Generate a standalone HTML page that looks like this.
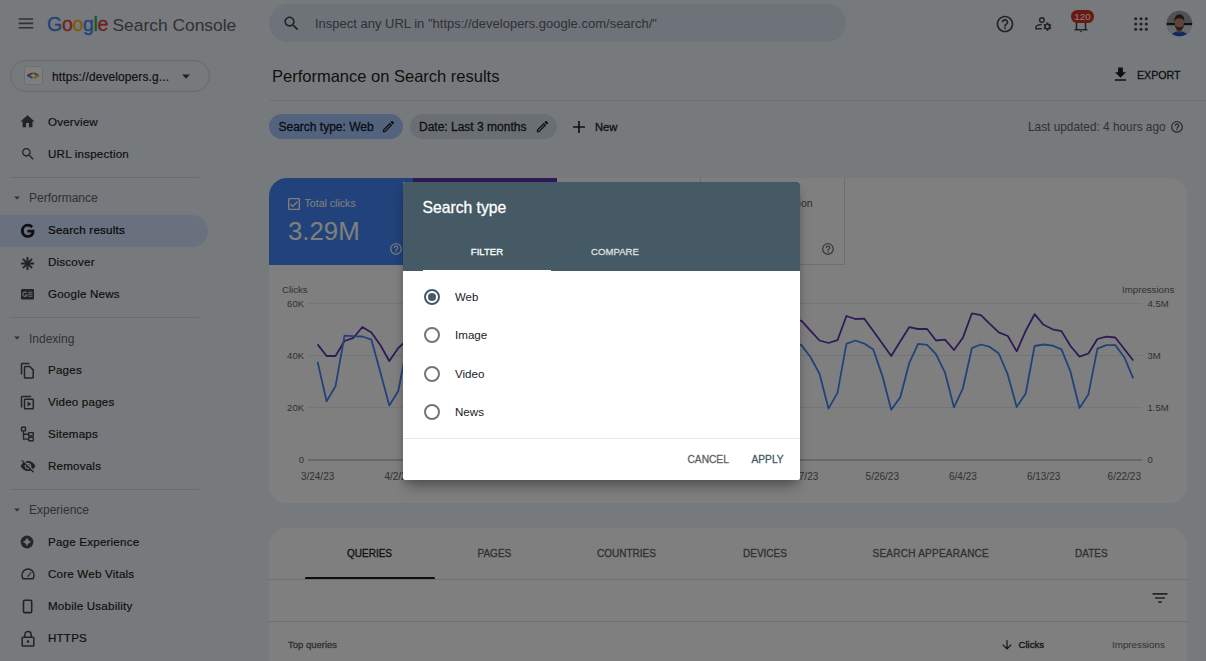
<!DOCTYPE html>
<html><head><meta charset="utf-8">
<style>
*{box-sizing:border-box;margin:0;padding:0}
html,body{width:1206px;height:661px;overflow:hidden}
body{position:relative;background:#edf4f9;font-family:"Liberation Sans",sans-serif;color:#1f1f1f}
.a{position:absolute;white-space:nowrap;line-height:20px;height:20px}
.m{-webkit-text-stroke:0.3px currentColor}
svg{position:absolute;display:block}
.nav{position:absolute;left:48px;font-size:11.6px;letter-spacing:0.2px;color:#1f1f1f;line-height:20px;white-space:nowrap;-webkit-text-stroke:0.2px currentColor}
.hd{position:absolute;left:29px;font-size:12px;color:#5f6368;line-height:20px;white-space:nowrap}
.div{position:absolute;height:1px;background:#d9d9d9}
#scrim{position:absolute;left:0;top:0;width:1206px;height:661px;background:rgba(0,0,0,0.5)}
</style></head><body>
<!-- HEADER -->
<svg style="left:16px;top:11px" width="20" height="24" viewBox="0 0 20 24"><path fill="#5f6368" d="M2.7 7.2h14.5v1.6H2.7zM2.7 11.6h14.5v1.6H2.7zM2.7 16h14.5v1.6H2.7z"/></svg>
<div class="a" style="left:47px;top:14px;font-size:19.5px;letter-spacing:-0.3px;-webkit-text-stroke:0.35px currentColor"><span style="color:#4285f4">G</span><span style="color:#ea4335">o</span><span style="color:#fbbc05">o</span><span style="color:#4285f4">g</span><span style="color:#34a853">l</span><span style="color:#ea4335">e</span></div>
<div class="a" style="left:112.5px;top:15px;font-size:17.4px;color:#5f6368">Search Console</div>

<div style="position:absolute;left:269px;top:4px;width:577px;height:38px;border-radius:19px;background:#dde5f3"></div>
<svg style="left:282px;top:14px" width="19" height="19" viewBox="0 0 24 24"><path fill="#444746" d="M15.5 14h-.79l-.28-.27C15.410 12.59 16 11.11 16 9.5 16 5.91 13.09 3 9.5 3S3 5.91 3 9.5 5.91 16 9.5 16c1.61 0 3.09-.59 4.23-1.57l.27.28v.79l5 4.99L20.49 19l-4.99-5zm-6 0C7.01 14 5 11.99 5 9.5S7.01 5 9.5 5 14 7.01 14 9.5 11.99 14 9.5 14z"/></svg>
<div class="a" style="left:315px;top:13.5px;font-size:13px;color:#5f6368">Inspect any URL in "https://developers.google.com/search/"</div>

<svg style="left:995px;top:13.5px" width="20" height="20" viewBox="0 0 24 24"><path fill="#444746" d="M11 18h2v-2h-2v2zm1-16C6.48 2 2 6.48 2 12s4.48 10 10 10 10-4.48 10-10S17.52 2 12 2zm0 18c-4.41 0-8-3.59-8-8s3.59-8 8-8 8 3.59 8 8-3.59 8-8 8zm0-14c-2.21 0-4 1.79-4 4h2c0-1.1.9-2 2-2s2 .9 2 2c0 2-3 1.750-3 5h2c0-2.25 3-2.5 3-5 0-2.21-1.79-4-4-4z"/></svg>
<svg style="left:1033px;top:14px" width="20" height="20" viewBox="0 0 20 20"><g fill="none" stroke="#444746" stroke-width="1.5"><circle cx="8.9" cy="6" r="2.3"/><path d="M8.8 10.6C6.5 10.6 3 11.4 3 12.6V14.7H8.9"/></g><path fill="#444746" transform="translate(14.4,12.6) scale(0.42) translate(-12,-12)" d="M19.14 12.94c.04-.3.06-.61.06-.94 0-.32-.02-.64-.07-.94l2.03-1.58c.18-.14.23-.41.12-.61l-1.920-3.32c-.12-.22-.37-.29-.59-.22l-2.39.96c-.5-.38-1.03-.7-1.62-.94l-.36-2.54c-.04-.24-.24-.41-.48-.41h-3.84c-.24 0-.43.17-.47.41l-.36 2.54c-.59.24-1.13.57-1.62.94l-2.39-.96c-.22-.08-.47 0-.59.22L2.74 8.87c-.12.21-.08.47.12.61l2.03 1.58c-.05.3-.09.63-.09.94s.02.64.07.94l-2.03 1.58c-.18.14-.23.41-.12.61l1.92 3.32c.12.22.37.29.59.22l2.39-.96c.5.38 1.03.7 1.62.94l.36 2.54c.05.24.24.41.48.41h3.84c.24 0 .44-.17.47-.41l.36-2.54c.59-.24 1.13-.56 1.62-.94l2.39.96c.22.08.47 0 .59-.22l1.92-3.32c.12-.22.07-.47-.12-.61l-2.01-1.58zM12 15.6c-1.98 0-3.6-1.62-3.6-3.6s1.62-3.6 3.6-3.6 3.6 1.62 3.6 3.6-1.62 3.6-3.6 3.6z"/></svg>
<svg style="left:1072px;top:17px" width="18" height="17" viewBox="0 0 18 17"><g fill="none" stroke="#444746" stroke-width="1.6"><path d="M4.5 3v9.5M13.5 3v9.5M2.5 12.8h13"/></g><path fill="#444746" d="M7.8 14h2.4l-1.2 1.4z"/></svg>
<div style="position:absolute;left:1071px;top:10px;width:23px;height:12.8px;border-radius:6.4px;background:#d93025;color:#fff;font-size:9.8px;line-height:13px;text-align:center">120</div>
<svg style="left:1133px;top:16px" width="16" height="16" viewBox="0 0 16 16"><g fill="#444746"><circle cx="2.7" cy="2.7" r="1.55"/><circle cx="8" cy="2.7" r="1.55"/><circle cx="13.3" cy="2.7" r="1.55"/><circle cx="2.7" cy="8" r="1.55"/><circle cx="8" cy="8" r="1.55"/><circle cx="13.3" cy="8" r="1.55"/><circle cx="2.7" cy="13.3" r="1.55"/><circle cx="8" cy="13.3" r="1.55"/><circle cx="13.3" cy="13.3" r="1.55"/></g></svg>
<svg style="left:1166px;top:10px" width="27" height="27" viewBox="0 0 27 27"><defs><clipPath id="av"><circle cx="13.4" cy="13.45" r="12.8"/></clipPath></defs><g clip-path="url(#av)"><rect width="27" height="27" fill="#9ea3a9"/><rect y="15" width="27" height="12" fill="#cdd3da"/><rect y="12.9" width="27" height="2.3" fill="#23272c"/><path d="M4 27c1.5-3.5 4.5-5.5 9.4-5.5s8 2 9.6 5.5z" fill="#1f4fbf"/><path d="M10.6 19h5.2v3.5h-5.2z" fill="#a87a66"/><ellipse cx="13.3" cy="12.6" rx="4.7" ry="6.6" fill="#bb8670"/><path d="M8.4 12.2c-.3-5 1.8-7.6 5-7.6s5.2 2.4 4.9 7.2c-.6-2.3-1.8-3.5-4.9-3.5s-4.4 1.4-5 3.9z" fill="#3b2c25"/><path d="M8.8 14.5c.4 4 2.3 6.2 4.6 6.2s4.2-2.2 4.6-6.2c-.8 1.8-2.2 2.6-4.6 2.6s-3.8-.8-4.6-2.6z" fill="#5b4037"/></g></svg>
<!-- SIDEBAR -->
<div style="position:absolute;left:10px;top:60px;width:200px;height:32px;border:1px solid #d0d2d4;border-radius:16px"></div>
<div style="position:absolute;left:23.5px;top:66px;width:19px;height:19px;border-radius:3px;background:#fff;border:1px solid #dadce0"></div>
<svg style="left:26px;top:70px" width="14" height="12" viewBox="0 0 14 12"><g fill="none" stroke-width="1.9" stroke-linecap="round"><path d="M6 3.5L2 5.4" stroke="#ea4335"/><path d="M2 5.7L5.8 7.6" stroke="#4285f4"/><path d="M8.4 3.4L12.3 5.5" stroke="#34a853"/><path d="M12 5.9L8.4 7.9" stroke="#fbbc05"/></g></svg>
<div class="a" style="left:52px;top:66.5px;font-size:11.9px;letter-spacing:0.15px;color:#1f1f1f;-webkit-text-stroke:0.2px #1f1f1f">https://developers.g...</div>
<svg style="left:180px;top:72px" width="12" height="10" viewBox="0 0 12 10"><path d="M2 2.5h8L6 6.8z" fill="#444746"/></svg>

<svg style="left:19px;top:113px" width="17" height="17" viewBox="0 0 24 24"><path fill="#444746" d="M10 20v-6h4v6h5v-8h3L12 3 2 12h3v8z"/></svg>
<div class="nav" style="top:112px">Overview</div>
<svg style="left:19.5px;top:146px" width="16" height="16" viewBox="0 0 24 24"><path fill="#444746" d="M15.5 14h-.79l-.28-.27C15.41 12.59 16 11.11 16 9.5 16 5.91 13.09 3 9.5 3S3 5.91 3 9.5 5.91 16 9.5 16c1.61 0 3.09-.59 4.23-1.57l.27.28v.79l5 4.99L20.49 19l-4.99-5zm-6 0C7.01 14 5 11.99 5 9.5S7.01 5 9.5 5 14 7.01 14 9.5 11.99 14 9.5 14z"/></svg>
<div class="nav" style="top:144px">URL inspection</div>
<div class="div" style="left:10px;top:177px;width:189px"></div>

<svg style="left:12px;top:193px" width="10" height="10" viewBox="0 0 10 10"><path d="M2 3.5h6L5 6.5z" fill="#5f6368"/></svg>
<div class="hd" style="top:188px">Performance</div>
<div style="position:absolute;left:0;top:215px;width:208px;height:31.5px;border-radius:0 16px 16px 0;background:#d3e3fd"></div>
<svg style="left:19.6px;top:223px" width="15.6" height="15.6" viewBox="0 0 24 24"><path fill="#1f1f1f" stroke="#1f1f1f" stroke-width="1.6" stroke-linejoin="round" d="M21.35,11.1H12.18V13.83H18.69C18.36,17.64 15.19,19.27 12.19,19.27C8.36,19.27 5,16.25 5,12C5,7.9 8.2,4.73 12.2,4.73C15.29,4.73 17.1,6.7 17.1,6.7L19,4.72C19,4.72 16.56,2 12.1,2C6.42,2 2.03,6.8 2.03,12C2.03,17.05 6.16,22 12.250,22C17.6,22 21.5,18.33 21.5,12.91C21.5,11.76 21.35,11.1 21.35,11.1V11.1Z"/></svg>
<div class="nav" style="top:220px;color:#0b0b0b">Search results</div>
<svg style="left:20px;top:255.5px" width="15" height="15" viewBox="0 0 15 15"><g stroke="#444746" stroke-width="2"><path d="M7.5 1v13M1 7.5h13M2.9 2.9l9.2 9.2M12.1 2.9l-9.2 9.2"/></g></svg>
<div class="nav" style="top:252px">Discover</div>
<svg style="left:21px;top:289px" width="13" height="11" viewBox="0 0 13 11"><rect width="13" height="10.5" rx="1.3" fill="#444746"/><path d="M5.6 3.8A2.2 2.2 0 1 0 5.9 6.2H4.2" fill="none" stroke="#d8dde2" stroke-width="1.2"/><path d="M7.2 3.3h4.2M7.2 5.3h4.2M7.2 7.3h4.2" stroke="#d8dde2" stroke-width="1.1"/></svg>
<div class="nav" style="top:284px">Google News</div>
<div class="div" style="left:10px;top:317px;width:189px"></div>

<svg style="left:12px;top:333px" width="10" height="10" viewBox="0 0 10 10"><path d="M2 3.5h6L5 6.5z" fill="#5f6368"/></svg>
<div class="hd" style="top:328.5px">Indexing</div>
<svg style="left:20px;top:362px" width="15" height="17" viewBox="0 0 15 17"><g fill="none" stroke="#444746" stroke-width="1.5"><path d="M1.5 12.5V2.2c0-.5.3-.8.8-.8h7.2"/><path d="M4.5 5.2c0-.5.3-.8.8-.8h4.4l3.5 3.5v7.4c0 .5-.3.8-.8.8H5.3c-.5 0-.8-.3-.8-.8z"/></g></svg>
<div class="nav" style="top:360px">Pages</div>
<svg style="left:20px;top:394.5px" width="15" height="16" viewBox="0 0 15 16"><g fill="none" stroke="#444746" stroke-width="1.5"><path d="M1.5 12.5V2.2c0-.5.3-.8.8-.8h8.8"/><rect x="4.5" y="4.3" width="8.8" height="9.4" rx=".8"/></g><path d="M7.6 6.6v4.9l3.6-2.45z" fill="#444746"/></svg>
<div class="nav" style="top:392px">Video pages</div>
<svg style="left:20px;top:426px" width="15" height="16" viewBox="0 0 15 16"><g fill="none" stroke="#444746" stroke-width="1.4"><rect x="1.5" y="1.3" width="4" height="3.6" rx=".5"/><rect x="8.7" y="6.6" width="4.6" height="3.4" rx=".5"/><rect x="8.7" y="11.4" width="4.6" height="3.4" rx=".5"/><path d="M3.5 5v8.1h5.2M3.5 8.3h5.2"/></g></svg>
<div class="nav" style="top:424px">Sitemaps</div>
<svg style="left:19.5px;top:458px" width="16" height="16" viewBox="0 0 24 24"><path fill="#444746" d="M12 7c2.76 0 5 2.24 5 5 0 .65-.13 1.26-.36 1.83l2.92 2.92c1.51-1.26 2.7-2.89 3.43-4.75-1.73-4.39-6-7.5-11-7.5-1.4 0-2.74.25-3.98.7l2.16 2.16C10.74 7.13 11.35 7 12 7zM2 4.27l2.28 2.28.46.46C3.08 8.3 1.78 10.02 1 12c1.73 4.39 6 7.5 11 7.5 1.55 0 3.03-.3 4.38-.84l.42.42L19.73 22 21 20.73 3.27 3 2 4.27zM7.53 9.8l1.55 1.55c-.05.21-.08.43-.08.65 0 1.66 1.34 3 3 3 .22 0 .44-.03.65-.08l1.55 1.55c-.67.33-1.41.53-2.2.53-2.76 0-5-2.24-5-5 0-.79.2-1.53.53-2.2zm4.31-.78l3.15 3.150.02-.16c0-1.66-1.34-3-3-3l-.17.01z"/></svg>
<div class="nav" style="top:456px">Removals</div>
<div class="div" style="left:10px;top:488.5px;width:189px"></div>

<svg style="left:12px;top:505px" width="10" height="10" viewBox="0 0 10 10"><path d="M2 3.5h6L5 6.5z" fill="#5f6368"/></svg>
<div class="hd" style="top:500px">Experience</div>
<svg style="left:20.4px;top:535.3px" width="14" height="14" viewBox="0 0 14 14"><circle cx="7" cy="7" r="6.4" fill="#4a4c4e"/><path d="M7 2.6Q7.9 6.1 11.4 7Q7.9 7.9 7 11.4Q6.1 7.9 2.6 7Q6.1 6.1 7 2.6z" fill="#edf4f9"/></svg>
<div class="nav" style="top:532px">Page Experience</div>
<svg style="left:20.5px;top:565px" width="14" height="15" viewBox="0 0 14 15"><g fill="none" stroke="#444746" stroke-width="1.5"><path d="M2 13.8h10c.6-1 1-2.2 1-3.6C13 6.8 10.3 4 7 4S1 6.8 1 10.2c0 1.4.4 2.6 1 3.6z"/></g><path d="M6.2 11.2l3.8-4.4.5.4-3.2 4.8z" fill="#444746"/></svg>
<div class="nav" style="top:564px">Core Web Vitals</div>
<svg style="left:22px;top:599px" width="11" height="15" viewBox="0 0 11 15"><rect x="1.5" y="1.2" width="8.2" height="12.4" rx="1.2" fill="none" stroke="#444746" stroke-width="1.6"/></svg>
<div class="nav" style="top:596px">Mobile Usability</div>
<svg style="left:20.5px;top:630px" width="14" height="17" viewBox="0 0 14 17"><g fill="none" stroke="#444746" stroke-width="1.5"><rect x="1.2" y="7.2" width="11.6" height="8.8" rx=".8"/><path d="M3.8 7.2V5c0-1.9 1.4-3.4 3.2-3.4s3.2 1.5 3.2 3.4v2.2"/></g><circle cx="7" cy="11.6" r="1.3" fill="#444746"/></svg>
<div class="nav" style="top:628px">HTTPS</div>
<!-- MAIN -->
<div class="a" style="left:272px;top:66px;font-size:16.5px;color:#1f1f1f">Performance on Search results</div>
<svg style="left:1111px;top:65px" width="19" height="19" viewBox="0 0 24 24"><path fill="#1f1f1f" d="M19 9h-4V3H9v6H5l7 7 7-7zM5 18v2h14v-2H5z"/></svg>
<div class="a m" style="left:1137px;top:65px;font-size:10.6px;color:#1f1f1f">EXPORT</div>
<div class="div" style="left:269px;top:100px;width:937px;background:#dfe1e3"></div>

<div style="position:absolute;left:269px;top:114px;width:134px;height:25px;border-radius:12.5px;background:#a8c7fa"></div>
<div class="a m" style="left:278.5px;top:116.5px;font-size:12px;color:#0b1a33">Search type: Web</div>
<svg style="left:381px;top:119px" width="15" height="15" viewBox="0 0 24 24"><path fill="#1f1f1f" d="M3 17.25V21h3.75L17.81 9.94l-3.75-3.75L3 17.25zM5.92 19H5v-.92l9.06-9.06.92.92L5.92 19zM20.71 5.63l-2.34-2.34c-.2-.2-.45-.29-.71-.29s-.51.1-.7.29l-1.83 1.830 3.75 3.75 1.83-1.83c.39-.39.39-1.02 0-1.41z"/></svg>
<div style="position:absolute;left:410px;top:114px;width:147px;height:25px;border-radius:12.5px;background:#d5dcea"></div>
<div class="a m" style="left:419px;top:116.5px;font-size:12px;color:#1f1f1f">Date: Last 3 months</div>
<svg style="left:534.5px;top:119px" width="15" height="15" viewBox="0 0 24 24"><path fill="#1f1f1f" d="M3 17.25V21h3.75L17.81 9.94l-3.75-3.75L3 17.25zM5.92 19H5v-.92l9.06-9.06.92.92L5.92 19zM20.71 5.63l-2.34-2.34c-.2-.2-.45-.29-.71-.29s-.51.1-.7.29l-1.83 1.83 3.75 3.75 1.83-1.83c.39-.39.39-1.02 0-1.41z"/></svg>
<svg style="left:572px;top:120px" width="14" height="14" viewBox="0 0 14 14"><path d="M7 1V13M1 7H13" stroke="#1f1f1f" stroke-width="1.6"/></svg>
<div class="a m" style="left:595px;top:116.5px;font-size:11.2px;color:#1f1f1f">New</div>

<div class="a" style="left:1028px;top:116.5px;font-size:11.85px;color:#5f6368">Last updated: 4 hours ago</div>
<svg style="left:1170px;top:119.5px" width="14" height="14" viewBox="0 0 24 24"><path fill="#444746" d="M11 18h2v-2h-2v2zm1-16C6.48 2 2 6.48 2 12s4.48 10 10 10 10-4.48 10-10S17.52 2 12 2zm0 18c-4.41 0-8-3.59-8-8s3.59-8 8-8 8 3.59 8 8-3.59 8-8 8zm0-14c-2.21 0-4 1.79-4 4h2c0-1.1.9-2 2-2s2 .9 2 2c0 2-3 1.75-3 5h2c0-2.25 3-2.5 3-5 0-2.21-1.79-4-4-4z"/></svg>

<!-- CHART CARD -->
<div style="position:absolute;left:269px;top:178px;width:918px;height:325px;border-radius:18px;background:#fff;overflow:hidden">
  <div style="position:absolute;left:0;top:0;width:144px;height:87px;background:#4285f4"></div>
  <div style="position:absolute;left:144px;top:0;width:144px;height:87px;background:#5e35b1"></div>
  <div style="position:absolute;left:431px;top:0;width:145px;height:87px;border-left:1px solid #dadce0;border-right:1px solid #dadce0;border-bottom:1px solid #dadce0"></div>
</div>
<svg style="left:286px;top:196px" width="16" height="16" viewBox="0 0 24 24"><path fill="#fff" d="M19 3H5c-1.11 0-2 .9-2 2v14c0 1.1.89 2 2 2h14c1.11 0 2-.9 2-2V5c0-1.1-.89-2-2-2zm0 16H5V5h14v14zM17.99 9l-1.41-1.42-6.59 6.59-2.58-2.57-1.42 1.41 4 3.99z"/></svg>
<div class="a" style="left:304.5px;top:193px;font-size:10.6px;color:#fff">Total clicks</div>
<div class="a" style="left:288px;top:220.5px;font-size:25.8px;color:#fff;line-height:20px">3.29M</div>
<svg style="left:389px;top:242px" width="14" height="14" viewBox="0 0 24 24"><path fill="#fff" d="M11 18h2v-2h-2v2zm1-16C6.48 2 2 6.48 2 12s4.48 10 10 10 10-4.48 10-10S17.52 2 12 2zm0 18c-4.41 0-8-3.59-8-8s3.59-8 8-8 8 3.59 8 8-3.59 8-8 8zm0-14c-2.21 0-4 1.79-4 4h2c0-1.1.9-2 2-2s2 .9 2 2c0 2-3 1.75-3 5h2c0-2.25 3-2.5 3-5 0-2.21-1.79-4-4-4z"/></svg>
<div class="a" style="left:734px;top:193px;font-size:10.6px;color:#5f6368">Average position</div>
<svg style="left:821px;top:241.5px" width="14" height="14" viewBox="0 0 24 24"><path fill="#5f6368" d="M11 18h2v-2h-2v2zm1-16C6.48 2 2 6.48 2 12s4.48 10 10 10 10-4.48 10-10S17.52 2 12 2zm0 18c-4.41 0-8-3.59-8-8s3.59-8 8-8 8 3.59 8 8-3.59 8-8 8zm0-14c-2.21 0-4 1.79-4 4h2c0-1.1.9-2 2-2s2 .9 2 2c0 2-3 1.75-3 5h2c0-2.25 3-2.5 3-5 0-2.21-1.79-4-4-4z"/></svg>

<div class="a" style="left:282px;top:280px;font-size:9.6px;color:#5f6368">Clicks</div>
<div class="a" style="left:1122px;top:280px;font-size:9.7px;color:#5f6368">Impressions</div>
<div style="position:absolute;left:258px;top:294px;width:46px;font-size:9.5px;color:#5f6368;line-height:20px;text-align:right">60K</div>
<div style="position:absolute;left:258px;top:346px;width:46px;font-size:9.5px;color:#5f6368;line-height:20px;text-align:right">40K</div>
<div style="position:absolute;left:258px;top:398px;width:46px;font-size:9.5px;color:#5f6368;line-height:20px;text-align:right">20K</div>
<div style="position:absolute;left:258px;top:450px;width:46px;font-size:9.5px;color:#5f6368;line-height:20px;text-align:right">0</div>
<div class="a" style="left:1147.5px;top:294px;font-size:9.5px;color:#5f6368">4.5M</div>
<div class="a" style="left:1147.5px;top:346px;font-size:9.5px;color:#5f6368">3M</div>
<div class="a" style="left:1147.5px;top:398px;font-size:9.5px;color:#5f6368">1.5M</div>
<div class="a" style="left:1147.5px;top:450px;font-size:9.5px;color:#5f6368">0</div>
<svg style="left:0;top:0" width="1206" height="661" viewBox="0 0 1206 661">
<g stroke="#e8eaed" stroke-width="1"><path d="M308 303.5H1142M308 355.5H1142M308 407.5H1142"/></g>
<path d="M308 460H1142" stroke="#9aa0a6" stroke-width="1"/>
<polyline points="317.6,344.4 326.6,356.0 335.5,356.0 344.5,341.0 353.5,337.8 362.4,327.0 371.4,332.4 380.3,345.0 389.3,361.0 398.3,348.0 407.2,340.0 416.2,319.0 425.2,320.9 434.1,330.8 443.1,340.5 452.0,343.0 461.0,340.2 470.0,316.0 478.9,319.0 487.9,320.9 496.9,330.8 505.8,340.5 514.8,343.0 523.7,340.2 532.7,316.0 541.7,319.0 550.6,320.9 559.6,330.8 568.6,340.5 577.5,343.0 586.5,340.2 595.5,316.0 604.4,319.0 613.4,320.9 622.3,330.8 631.3,340.5 640.3,343.0 649.2,340.2 658.2,316.0 667.2,319.0 676.1,320.9 685.1,330.8 694.0,340.5 703.0,343.0 712.0,340.2 720.9,316.0 729.9,319.0 738.9,320.9 747.8,330.8 756.8,340.5 765.8,343.0 774.7,340.2 783.7,316.0 792.6,319.0 801.6,320.9 810.6,330.8 819.5,340.5 828.5,343.0 837.5,340.2 846.4,316.0 855.4,319.0 864.3,318.7 873.3,331.0 882.3,343.5 891.2,356.0 900.2,341.6 909.2,327.2 918.1,329.0 927.1,329.0 936.0,340.5 945.0,339.6 954.0,350.0 962.9,337.8 971.9,313.3 980.9,315.1 989.8,323.9 998.8,332.4 1007.8,336.0 1016.7,351.4 1025.7,330.8 1034.6,314.2 1043.6,324.8 1052.6,329.3 1061.5,331.1 1070.5,346.0 1079.5,356.6 1088.4,353.5 1097.4,339.0 1106.3,336.6 1115.3,337.5 1124.3,349.0 1133.2,360.5" fill="none" stroke="#5e35b1" stroke-width="1.8" stroke-linejoin="round"/>
<polyline points="317.6,361.9 326.6,401.3 335.5,386.3 344.5,335.6 353.5,336.2 362.4,336.5 371.4,339.7 380.3,372.0 389.3,405.4 398.3,391.0 407.2,345.0 416.2,340.5 425.2,345.4 434.1,357.2 443.1,373.8 452.0,408.6 461.0,392.9 470.0,343.9 478.9,340.5 487.9,345.4 496.9,357.2 505.8,373.8 514.8,408.6 523.7,392.9 532.7,343.9 541.7,340.5 550.6,345.4 559.6,357.2 568.6,373.8 577.5,408.6 586.5,392.9 595.5,343.9 604.4,340.5 613.4,345.4 622.3,357.2 631.3,373.8 640.3,408.6 649.2,392.9 658.2,343.9 667.2,340.5 676.1,345.4 685.1,357.2 694.0,373.8 703.0,408.6 712.0,392.9 720.9,343.9 729.9,340.5 738.9,345.4 747.8,357.2 756.8,373.8 765.8,408.6 774.7,392.9 783.7,343.9 792.6,340.5 801.6,345.4 810.6,357.2 819.5,373.8 828.5,408.6 837.5,392.9 846.4,343.9 855.4,340.5 864.3,343.6 873.3,349.6 882.3,375.6 891.2,409.8 900.2,397.4 909.2,363.2 918.1,343.9 927.1,344.8 936.0,354.1 945.0,372.6 954.0,407.4 962.9,388.3 971.9,348.1 980.9,344.5 989.8,346.9 998.8,353.5 1007.8,374.7 1016.7,407.1 1025.7,393.5 1034.6,346.0 1043.6,344.5 1052.6,345.7 1061.5,349.3 1070.5,371.7 1079.5,408.0 1088.4,394.4 1097.4,348.7 1106.3,345.1 1115.3,345.1 1124.3,357.2 1133.2,378.4" fill="none" stroke="#4285f4" stroke-width="1.8" stroke-linejoin="round"/>
</svg>
<div style="position:absolute;left:267.6px;top:466.5px;width:100px;font-size:10px;color:#5f6368;line-height:20px;text-align:center">3/24/23</div>
<div style="position:absolute;left:348.3px;top:466.5px;width:100px;font-size:10px;color:#5f6368;line-height:20px;text-align:center">4/2/23</div>
<div style="position:absolute;left:751.6px;top:466.5px;width:100px;font-size:10px;color:#5f6368;line-height:20px;text-align:center">5/17/23</div>
<div style="position:absolute;left:832.3px;top:466.5px;width:100px;font-size:10px;color:#5f6368;line-height:20px;text-align:center">5/26/23</div>
<div style="position:absolute;left:912.9px;top:466.5px;width:100px;font-size:10px;color:#5f6368;line-height:20px;text-align:center">6/4/23</div>
<div style="position:absolute;left:993.6px;top:466.5px;width:100px;font-size:10px;color:#5f6368;line-height:20px;text-align:center">6/13/23</div>
<div style="position:absolute;left:1074.3px;top:466.5px;width:100px;font-size:10px;color:#5f6368;line-height:20px;text-align:center">6/22/23</div>

<div style="position:absolute;left:428.9px;top:466.5px;width:100px;font-size:10px;color:#5f6368;line-height:20px;text-align:center">4/11/23</div>
<div style="position:absolute;left:509.6px;top:466.5px;width:100px;font-size:10px;color:#5f6368;line-height:20px;text-align:center">4/20/23</div>
<div style="position:absolute;left:590.3px;top:466.5px;width:100px;font-size:10px;color:#5f6368;line-height:20px;text-align:center">4/29/23</div>
<div style="position:absolute;left:670.9px;top:466.5px;width:100px;font-size:10px;color:#5f6368;line-height:20px;text-align:center">5/8/23</div>

<!-- TABLE CARD -->
<div style="position:absolute;left:269px;top:528px;width:918px;height:160px;border-radius:18px;background:#fff"></div>
<div class="a m" style="left:347px;top:544px;font-size:10px;color:#1f1f1f">QUERIES</div>
<div class="a m" style="left:477.5px;top:544px;font-size:10px;color:#5f6368">PAGES</div>
<div class="a m" style="left:597px;top:544px;font-size:10px;color:#5f6368">COUNTRIES</div>
<div class="a m" style="left:743px;top:544px;font-size:10px;color:#5f6368">DEVICES</div>
<div class="a m" style="left:872.5px;top:544px;font-size:10px;letter-spacing:0.25px;color:#5f6368">SEARCH APPEARANCE</div>
<div class="a m" style="left:1075px;top:544px;font-size:10px;color:#5f6368">DATES</div>
<div style="position:absolute;left:305px;top:577.3px;width:130px;height:2.4px;border-radius:1.2px;background:#1f1f1f"></div>
<div class="div" style="left:269px;top:579.3px;width:918px;background:#dadce0"></div>
<svg style="left:1150px;top:588px" width="20" height="20" viewBox="0 0 24 24"><path fill="#444746" d="M10 18h4v-2h-4v2zM3 6v2h18V6H3zm3 7h12v-2H6v2z"/></svg>
<div class="div" style="left:269px;top:621px;width:918px;background:#dadce0"></div>
<div class="a m" style="left:288px;top:634.5px;font-size:9.5px;color:#5f6368">Top queries</div>
<svg style="left:1000px;top:638px" width="14" height="14" viewBox="0 0 24 24"><path fill="#1f1f1f" d="M20 12l-1.41-1.41L13 16.17V4h-2v12.17l-5.58-5.59L4 12l8 8 8-8z"/></svg>
<div class="a m" style="left:1018.5px;top:635px;font-size:9.6px;color:#1f1f1f">Clicks</div>
<div class="a" style="left:1112px;top:635px;font-size:9.8px;color:#5f6368">Impressions</div>
<div id="scrim"></div>

<!-- DIALOG -->
<div style="position:absolute;left:403px;top:182px;width:397px;height:298px;background:#fff;border-radius:2px;overflow:hidden;box-shadow:0 10px 14px -4px rgba(0,0,0,.32),0 3px 6px rgba(0,0,0,.12)">
  <div style="position:absolute;left:0;top:0;width:397px;height:89px;background:#455a64"></div>
  <div class="a m" style="left:19.5px;top:16px;font-size:15.7px;color:#fff">Search type</div>
  <div style="position:absolute;left:20px;top:60px;width:128px;text-align:center;font-size:9.6px;line-height:20px;color:#fff" class="m">FILTER</div>
  <div style="position:absolute;left:148px;top:60px;width:128px;text-align:center;font-size:9.6px;line-height:20px;color:rgba(255,255,255,.75)" class="m">COMPARE</div>
  <div style="position:absolute;left:20px;top:87.5px;width:128px;height:2px;background:#fff"></div>
  <div style="position:absolute;left:21px;top:106.5px;width:16px;height:16px;border-radius:50%;border:2px solid #455a64"></div>
  <div style="position:absolute;left:25px;top:110.5px;width:8px;height:8px;border-radius:50%;background:#455a64"></div>
  <div class="a" style="left:52px;top:104.5px;font-size:11.4px;color:#202124">Web</div>
  <div style="position:absolute;left:21px;top:145px;width:16px;height:16px;border-radius:50%;border:2px solid #757575"></div>
  <div class="a" style="left:52px;top:143px;font-size:11.6px;color:#202124">Image</div>
  <div style="position:absolute;left:21px;top:183.5px;width:16px;height:16px;border-radius:50%;border:2px solid #757575"></div>
  <div class="a" style="left:52px;top:181.5px;font-size:11.6px;color:#202124">Video</div>
  <div style="position:absolute;left:21px;top:222px;width:16px;height:16px;border-radius:50%;border:2px solid #757575"></div>
  <div class="a" style="left:52px;top:220px;font-size:11.6px;color:#202124">News</div>
  <div style="position:absolute;left:0;top:256px;width:397px;height:1px;background:#e8eaed"></div>
  <div class="a m" style="left:284.5px;top:267.7px;font-size:10.2px;color:#5f6368">CANCEL</div>
  <div class="a m" style="left:348.5px;top:267.7px;font-size:10.2px;color:#455a64">APPLY</div>
</div>
</body></html>
